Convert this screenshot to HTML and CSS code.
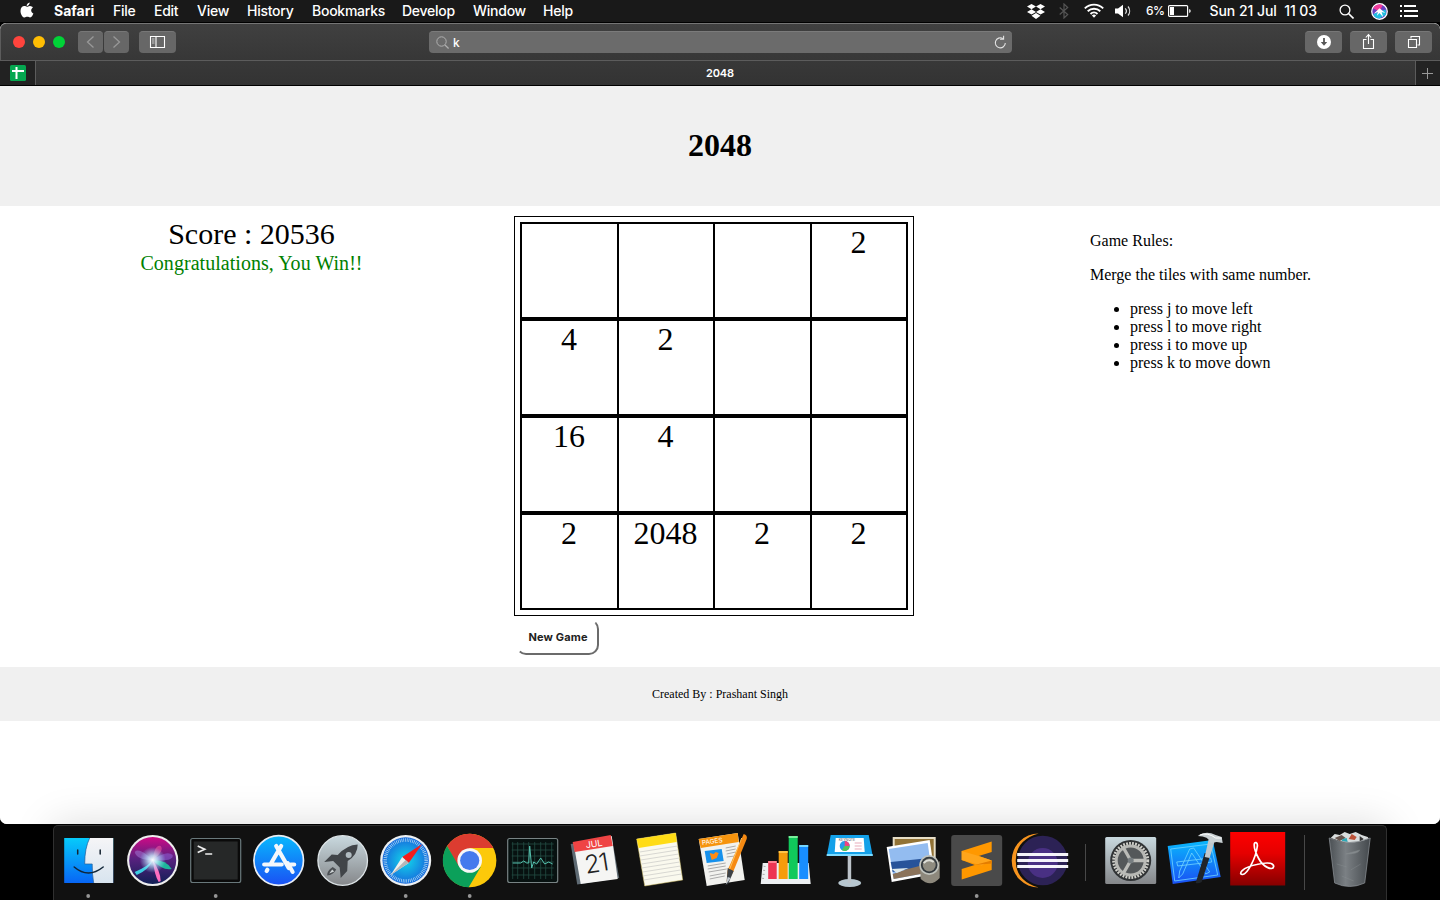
FILE: index.html
```html
<!DOCTYPE html>
<html lang="en">
<head>
<meta charset="utf-8">
<title>2048</title>
<link rel="stylesheet" href="styles.css">
</head>
<body>
<div class="desktop">
  <header class="menubar">
    <svg class="apple" viewBox="0 0 14 17"><path fill="#fff" d="M9.700.4c.1 1.600-1.200 3.400-3 3.500C6.500 2.300 8 .6 9.700.4zM7 4.800c.7 0 1.700-.9 3.100-.8 1.100.1 2.100.5 2.800 1.500-2.500 1.600-2.100 4.900.5 6-.6 1.700-1.900 4-3.300 4-1.100 0-1.500-.7-2.800-.7s-1.700.7-2.800.7C2.700 15.500.5 12.200.5 8.900.5 5.900 2.300 4.100 4.300 4.100c1.200 0 2 .7 2.700.7z"/></svg>
    <nav class="menus">
      <b>Safari</b><span>File</span><span>Edit</span><span>View</span><span>History</span><span>Bookmarks</span><span>Develop</span><span>Window</span><span>Help</span>
    </nav>
    <div class="status">
      <svg class="s-dropbox" viewBox="0 0 20 17"><g fill="#fff"><path d="M5.500 1l4.500 2.600-4.500 2.700L1 3.600zM14.500 1L19 3.600l-4.500 2.700L10 3.600zM5.500 6.300L10 9l-4.500 2.600L1 9zM14.500 6.300L19 9l-4.500 2.600L10 9zM5.500 12.700L10 10l4.500 2.700-4.500 3.300z"/></g></svg>
      <svg class="s-bt" viewBox="0 0 10 16"><path d="M.7 4.500l8 7L5 15V1l3.700 3.500-8 7" fill="none" stroke="#555" stroke-width="1.200"/></svg>
      <svg class="s-wifi" viewBox="0 0 20 15"><g fill="none" stroke="#fff" stroke-width="1.900"><path d="M.8 5.400a13 13 0 0 1 18.400 0M3.700 8.300a9 9 0 0 1 12.600 0M6.500 11a5 5 0 0 1 7 0"/></g><path fill="#fff" d="M7.900 12.500a3 3 0 0 1 4.200 0L10 14.700z"/></svg>
      <svg class="s-vol" viewBox="0 0 18 14"><path fill="#fff" d="M1 4.500h3L9 .8v12.400L4 9.500H1z"/><path d="M11.200 4.300a4 4 0 0 1 0 5.400M14 2.500a7 7 0 0 1 0 9" fill="none" stroke="#ddd" stroke-width="1.200"/></svg>
      <span class="pct">6%</span>
      <svg class="s-bat" viewBox="0 0 24 12"><rect x=".6" y=".6" width="19" height="10.800" rx="1" fill="none" stroke="#fff" stroke-width="1.200"/><path fill="#fff" d="M2 2h4v8H2zM21.200 4c2 .7 2 3.300 0 4z"/></svg>
      <span class="clock">Sun 21 Jul&nbsp; 11 03</span>
      <svg class="s-search" viewBox="0 0 15 15"><circle cx="6" cy="6" r="4.900" fill="none" stroke="#fff" stroke-width="1.300"/><path d="M9.500 9.500l5 5" stroke="#fff" stroke-width="1.600"/></svg>
      <svg class="s-siri" viewBox="-8 -8 16 16"><circle r="7.300" fill="#6a3fc0" stroke="#fff" stroke-width="1.200"/><path fill="#f23c9b" d="M0 0L-6-3A6.600 6.600 0 0 1 3-6z"/><path fill="#20bfe0" d="M0 0L-6 2.500A6.600 6.600 0 0 0 0 6.500L6 3 6-2z"/><path fill="#fff" d="M0-3L5.500 1.500 2 .5l1.500 5L0 1.500-2.500 4-1.500.5-5.500 2z"/></svg>
      <svg class="s-list" viewBox="0 0 18 12"><path d="M0 1h2M0 6h2M0 11h2M4 1h12M4 6h14M4 11h14" stroke="#fff" stroke-width="1.900"/></svg>
    </div>
  </header>

  <section class="window">
    <div class="toolbar">
      <div class="lights"><i class="red"></i><i class="yellow"></i><i class="green"></i></div>
      <div class="navs">
        <span class="btn nav"><svg width="24" height="22"><path d="M15.500 5.500L9.500 11l6 5.500" fill="none" stroke="#989898" stroke-width="1.300"/></svg></span>
        <span class="btn nav"><svg width="24" height="22"><path d="M9.500 5.500l6 5.500-6 5.500" fill="none" stroke="#989898" stroke-width="1.300"/></svg></span>
      </div>
      <span class="btn side"><svg width="37" height="22"><path d="M11.500 5.500h14v11h-14zM17 5.500v11" fill="none" stroke="#fff" stroke-width="1.100"/><path d="M13 8h2.500M13 10h2.500M13 12h2.500" stroke="#ccc" stroke-width="1"/></svg></span>
      <div class="address">
        <svg width="13" height="13"><circle cx="5.500" cy="5.500" r="4.700" fill="none" stroke="#b0b0b0"/><path d="M9 9l3.600 3.500" stroke="#b0b0b0" stroke-width="1.200"/></svg>
        <span>k</span>
        <svg class="reload" width="14" height="15"><path d="M9.800 3.500A5 5 0 1 0 12.300 8M10.600.8V4.200H7" fill="none" stroke="#e4e4e4" stroke-width="1.100"/></svg>
      </div>
      <div class="actions">
        <span class="btn"><svg width="37" height="22"><circle cx="19" cy="11" r="7" fill="#fff"/><path d="M19 7v5" stroke="#555" stroke-width="1.800"/><path d="M15.800 11h6.400L19 14.800z" fill="#555"/></svg></span>
        <span class="btn"><svg width="37" height="22"><path d="M16.500 8.500h-3v9h10v-9h-3M18.500 13V4M15.800 6.500l2.700-2.900 2.700 2.900" fill="none" stroke="#fff" stroke-width="1.100"/></svg></span>
        <span class="btn"><svg width="37" height="22"><path d="M13.500 8.500h8v8h-8zM16 7.500V5.500h8.500v8.500h-2" fill="none" stroke="#fff" stroke-width="1.100"/></svg></span>
      </div>
    </div>
    <div class="tabs">
      <span class="pinned"><svg width="16" height="16"><rect width="16" height="16" rx="1.500" fill="#05a750"/><path d="M2 6h12M6.500 2v12" stroke="#fff" stroke-width="2"/></svg></span>
      <span class="tab">2048</span>
      <span class="add"><svg width="24" height="24"><path d="M11.500 7v11M6 12.500h11" stroke="#999"/></svg></span>
    </div>

    <main class="page">
      <div class="banner"><h1>2048</h1></div>
      <div class="content">
        <div class="score"><p class="points">Score : 20536</p><p class="win">Congratulations, You Win!!</p></div>
        <div class="game">
          <div class="board">
            <div class="row"><div></div><div></div><div></div><div>2</div></div>
            <div class="row"><div>4</div><div>2</div><div></div><div></div></div>
            <div class="row"><div>16</div><div>4</div><div></div><div></div></div>
            <div class="row"><div>2</div><div>2048</div><div>2</div><div>2</div></div>
          </div>
          <button class="new-game">New Game</button>
        </div>
        <div class="rules">
          <p>Game Rules:</p>
          <p>Merge the tiles with same number.</p>
          <ul><li>press j to move left</li><li>press l to move right</li><li>press i to move up</li><li>press k to move down</li></ul>
        </div>
      </div>
      <footer>Created By : Prashant Singh</footer>
    </main>
  </section>

  <div class="dock">
    <svg width="0" height="0" class="defs"><defs>
      <linearGradient id="finder" x2="0" y2="1"><stop stop-color="#06cbfb"/><stop offset="1" stop-color="#0866f5"/></linearGradient>
      <linearGradient id="silver" x2="0" y2="1"><stop stop-color="#c9d9df"/><stop offset="1" stop-color="#85878a"/></linearGradient>
      <linearGradient id="blue" x2="0" y2="1"><stop stop-color="#08b9fd"/><stop offset="1" stop-color="#1a50f4"/></linearGradient>
      <linearGradient id="face" x2="0" y2="1"><stop stop-color="#f5f5f7"/><stop offset="1" stop-color="#d8e4ef"/></linearGradient>
      <radialGradient id="compass"><stop stop-color="#12d8ea"/><stop offset="1" stop-color="#176bdd"/></radialGradient>
      <linearGradient id="pdf" x2="0" y2="1"><stop stop-color="#fe0000"/><stop offset=".4" stop-color="#e50000"/><stop offset="1" stop-color="#850000"/></linearGradient>
      <linearGradient id="bin"><stop stop-color="#4b5054"/><stop offset=".4" stop-color="#7b8084"/><stop offset="1" stop-color="#44494d"/></linearGradient>
      <linearGradient id="siribg" x2="0" y2="1"><stop stop-color="#d00a86"/><stop offset=".45" stop-color="#5a2180"/><stop offset="1" stop-color="#111f55"/></linearGradient>
      <radialGradient id="glow"><stop stop-color="#fff"/><stop offset=".35" stop-color="#cdefff" stop-opacity=".8"/><stop offset="1" stop-color="#9df" stop-opacity="0"/></radialGradient>
    </defs></svg>

    <svg class="app" viewBox="-31.7 0 63.400 74">
      <path d="M-24.500 12h49v45h-49z" fill="url(#finder)"/><path d="M1 12H24.500v45H5Q3.500 49 3.500 38H-4Q-4 22 1 12z" fill="url(#face)"/>
      <path d="M1 12Q-4 22-4 38H3.500q0 11 1.500 19" fill="none" stroke="#245f99" stroke-width=".7"/><path d="M-11 24v4M11.500 24v4" stroke="#152331" stroke-width="1.500" stroke-linecap="round"/><path d="M-14.500 41q14 12 29 0" fill="none" stroke="#102538" stroke-width="1.500" stroke-linecap="round"/><circle cx="-.5" cy="70" r="1.900" fill="#969696"/></svg>
    <svg class="app" viewBox="-31.7 0 63.400 74"><circle cy="34.500" r="25.600" fill="#eee"/><circle cy="34.500" r="23.500" fill="url(#siribg)"/>
      <path d="M0 34Q-14 21-18 26q2 8 18 8" fill="#9d77d3" opacity=".55"/><path d="M0 34Q2 18 8 20q4 5-8 14" fill="#e8559f" opacity=".6"/><path d="M0 34Q14 24 20 29 21 36 0 34" fill="#8d5bd0" opacity=".6"/><path d="M0 34Q14 34 19 43 10 45 0 34" fill="#1ac6a0" opacity=".9"/><path d="M0 34Q-4 40-18 46L-16 49Q-4 44 0 34" fill="#3ee0f0" opacity=".9"/><path d="M0 34Q2 50 6 56l2-1Q8 46 0 34" fill="#ff6dbf"/><circle cy="34" r="13" fill="url(#glow)"/></svg>
    <svg class="app" viewBox="-31.7 0 63.400 74"><rect x="-25" y="12.500" width="50" height="44" rx="2" fill="#0a0a0a" stroke="#69787b" stroke-width="1.200"/><path d="M-22 15.500h44v38h-44z" fill="#262828"/><path d="M-18 20l7 3.200-7 3.200M-10.500 28h7" fill="none" stroke="#eee" stroke-width="1.700"/><circle cy="70" r="1.900" fill="#969696"/></svg>
    <svg class="app" viewBox="-31.7 0 63.400 74"><circle cy="34.500" r="24.800" fill="url(#blue)" stroke="#e9eef4" stroke-width="1.700"/><g stroke="#f4f7fb" stroke-width="4.200" stroke-linecap="round"><path d="M2.500 20L-8 38M-2.500 20L10 42M-14.500 38.500H3M12 38.500h3.500M-12 45l.7-1.200"/></g><path d="M9 37l5 9" stroke="#f4f7fb" stroke-width="4" stroke-linecap="round"/></svg>
    <svg class="app" viewBox="-31.7 0 63.400 74"><circle cy="34.500" r="24.800" fill="url(#silver)" stroke="#dce3e6" stroke-width="1.300"/><path fill="#414549" d="M15 18.500Q4 19-5 29l-6-.5-7.500 7.500 9-1 6.500 6.500L-2 52l6.500-7 .5-10Q15 29 15 18.500z"/><circle cx="6" cy="29" r="3" fill="#b0bbc0"/><path d="M-10 41q-6 4-5.500 8.500 6-.5 9-6z" fill="#4b4f53"/><path d="M-10.500 43.500l-3 4 5-2z" fill="#d0d5d7"/></svg>
    <svg class="app" viewBox="-31.7 0 63.400 74"><circle cy="34.500" r="25.500" fill="#edf0f2"/><circle cy="34.500" r="23.200" fill="url(#compass)"/><circle cy="34.500" r="20.500" fill="none" stroke="#b5dcf6" stroke-width="3.500" stroke-dasharray=".7 1.100"/><path d="M16.500 18L-3.500 31l6.500 6z" fill="#f31c1c"/><path d="M-15 49l11.500-18L3 37z" fill="#f0f0ed"/><path d="M-15 49L3 37l-3-3z" fill="#b5b7b8"/><circle cy="70" r="1.900" fill="#969696"/></svg>
    <svg class="app" viewBox="-31.7 0 63.400 74"><circle cy="34.500" r="26.700" fill="#fcc90a"/><path d="M-22.600 20A26.700 26.700 0 0 1 23.600 22L0 22-11 42z" fill="#dc3c30"/><path d="M-22.600 20A26.700 26.700 0 0 0-1 61.200L11 41-11 40z" fill="#0ba05a"/><circle cy="34.500" r="12.300" fill="#f7f7f7"/><circle cy="34.500" r="9.600" fill="#447aed"/><circle cy="70" r="1.900" fill="#969696"/></svg>
    <svg class="app" viewBox="-31.7 0 63.400 74"><rect x="-25" y="12.500" width="50" height="44" rx="2" fill="#071110" stroke="#788384" stroke-width="1.200"/><path d="M-20 16v37M-15 16v37M-9 16v37M-4 16v37M2 16v37M8 16v37M13 16v37M19 16v37M-21 18h42M-21 24h42M-21 30h42M-21 36h42M-21 42h42M-21 49h42" stroke="#234c44" stroke-width=".8"/><path d="M-20 37h8l3-2 3 2h2l1-17 2 22 2-6 3 2 4-6 4 6 4-2 4 2" fill="none" stroke="#55c2af"/></svg>
    <svg class="app" viewBox="-31.7 0 63.400 74"><path d="M-25 18l41-7 7.500 41-42 6.500z" fill="#5e6a73"/><path d="M-22 18l38-8 6 43-37 5z" fill="#f5f5f4"/><path d="M-23 16l38-7 2 11-38 6z" fill="#ef4444"/><g transform="rotate(-9 0 35)"><text x="1" y="21" class="month">JUL</text><text x="0" y="46" class="day">21</text></g></svg>
    <svg class="app" viewBox="-31.7 0 63.400 74"><path d="M-23 13l39-6 7 47-38 6z" fill="#faf9ee" stroke="#d6c565" stroke-width=".5"/><path d="M-23 13l39-6 1 9-38 6z" fill="#ffdc16"/><path d="M-20 26l38-6M-20 30l38-6M-19 34l38-6M-18 38l38-6M-18 42l38-6M-17 46l38-6M-17 50l38-6M-16 54l38-6" stroke="#c8c8c5" stroke-width=".7"/></svg>
    <svg class="app" viewBox="-31.7 0 63.400 74"><path d="M-24 13l39-6 7 47-38 6z" fill="#f2f2ef"/><path d="M-24 13l39-6 1 9-38 6z" fill="#f6940e"/><text class="pages" transform="rotate(-8)" x="-23" y="16">PAGES</text><path d="M-18 25l17-2 2 12-17 2z" fill="#1791ec"/><path d="M-13 27l4 1 2-2 3 1-2 5-5 2z" fill="#ff8b13"/><path d="M3 22l10-2M3 25l10-2M4 28l9-2M4 31l8-1M-15 40l18-3M-15 43l18-3M-14 46l18-3M-13 50l16-3M-13 53l15-3" stroke="#aaa"/><path d="M21 8q4 1 3 5L10 47l-6 9 1-12z" fill="#f68a13"/><path d="M5 42l6 3-6 14-1-4z" fill="#3d4247"/><path d="M3 59l2-8 3 1z" fill="#c5ccd2"/><path d="M19 12L7 43" stroke="#ffc45c"/></svg>
    <svg class="app" viewBox="-31.7 0 63.400 74"><path d="M-23 37h46l2 21h-50z" fill="#edf0f2"/><path d="M-21 40l-2 15" stroke="#aaa" stroke-width="2" stroke-dasharray="1 3"/><path fill="#ed3553" d="M-17.500 35h8.500v18h-8.500z"/><path fill="#f69c0c" d="M-7 25h9v28h-9z"/><path fill="#10c95b" d="M3 10h9v43H3z"/><path fill="#188eff" d="M13.500 19h9v34h-9z"/><path d="M-17.500 36h8.500" stroke="#ff8290" stroke-width="2"/><path d="M-7 26h9" stroke="#ffc448" stroke-width="2"/><path d="M3 11h9" stroke="#7bef9b" stroke-width="2"/><path d="M13.500 20h9" stroke="#74d6ff" stroke-width="2"/></svg>
    <svg class="app" viewBox="-31.7 0 63.400 74"><ellipse cy="57" rx="11.500" ry="4" fill="#b7c7d0"/><path d="M-2 30h3.500v27h-3.500z" fill="#bdc4ca"/><path d="M-19 9h38l4 21h-46z" fill="#14a1e9"/><path d="M-23 28h46v2h-46z" fill="#7fdcff"/><path d="M-14 12h28l1 14h-30z" fill="#fff"/><text class="keynote" x="-11" y="15">KEYNOTE</text><circle cx="-5" cy="20" r="5" fill="#249cea"/><path d="M-5 20v-5a5 5 0 0 1 5 5z" fill="#ee437e"/><path d="M-5 20h5a5 5 0 0 1-8 4z" fill="#54c55a"/><path d="M5 17h7M5 20h7M5 23h7" stroke="#e7abba"/></svg>
    <svg class="app" viewBox="-31.7 0 63.400 74"><path d="M-20 11h43v34h-43z" fill="#e7dec7"/><path d="M-18 13h39v30h-39z" fill="#927336"/><path d="M-26 21l43-7 5 34-43 8z" fill="#fff"/><path d="M-24 23l39-6 4 29-38 7z" fill="#93bcf0"/><path d="M-22 36l39-4 1 8-38 6z" fill="#27539a"/><path d="M-20 48l15-5 8-2 15-4 1 9-38 7z" fill="#8b735b"/><path d="M-21 43l17-1-12 5z" fill="#e0ebed"/><path d="M7 36q10 12 20-1v17q-9 10-19 1z" fill="#8d887c"/><circle cx="16.500" cy="39" r="10" fill="#c0c3bd"/><circle cx="16.500" cy="39" r="8.300" fill="#343a3e"/><circle cx="16.500" cy="39" r="6.500" fill="#8f8c80"/><path d="M11 37q5-5 10-1" stroke="#dedfd8" stroke-width="2" fill="none"/></svg>
    <svg class="app" viewBox="-31.7 0 63.400 74"><rect x="-25.500" y="9" width="51" height="51" rx="3" fill="#4a4a4a"/><path d="M-15 25l30-9.500V26L2 30l13 4.500V44l-30 9.500V43l13-4-13-5z" fill="#ff9800"/><path d="M2 30l13 4.500-10 5-20-5.500v-9z" fill="#ffa51b"/><path d="M15 34.500v3L-2 39z" fill="#e47d00"/><circle cy="70" r="1.900" fill="#969696"/></svg>
    <svg class="app" viewBox="-31.7 0 63.400 74"><path d="M-1 7.500a27 27 0 1 0 0 54Q-24 55-24 34.500T-1 7.500z" fill="#f7941e"/><circle cx="3" cy="34.500" r="24.800" fill="#2c2255"/><circle cx="3" cy="37" r="15" fill="#493083"/><path d="M-22.500 28.500h51M-22.500 34.500h51M-22.500 40.500h51" stroke="#f5f4fa" stroke-width="3"/></svg>
    <i class="divider short"></i>
    <svg class="app" viewBox="-31.7 0 63.400 74"><rect x="-25.500" y="11" width="51" height="47" rx="1.500" fill="url(#silver)"/><circle cy="34.500" r="20.500" fill="#303335"/><circle cy="34.500" r="17" fill="none" stroke="#d1d1cb" stroke-width="3" stroke-dasharray="1.800 1.200"/><circle cy="34.500" r="14.500" fill="#54585a" stroke="#b8b9b5" stroke-width="3"/><path d="M0 34.500h15M0 34.500l-8-14M0 34.500l-8 14" stroke="#bbbcb8" stroke-width="3.300"/><circle cy="34.500" r="3" fill="#777e81"/></svg>
    <svg class="app" viewBox="-31.7 0 63.400 74"><path d="M-27 20l45-6 8 37-48 7z" fill="url(#blue)"/><path d="M-24 23l40-5 7 31-43 6zM-18 36l34-4 1 4-34 4zM-5 23l4-1 16 24-4 2-14-21-9 21-4 4 1-7z" fill="none" stroke="#71d5ff" stroke-width=".8"/><path d="M10 27l6 1-9 28q-3 2-6 1z" fill="#20252b"/><path d="M14 13l6 2-5 17-5-1z" fill="#bfc8ce"/><path d="M3 10q8-6 18-1l6 2 1 6-6-1-6 1q-2-7-13-7z" fill="#c9d0d3"/><path d="M5 9q8-3 16 3h6" fill="none" stroke="#fff"/></svg>
    <svg class="app" viewBox="-31.7 0 63.400 74"><path d="M-27.500 6h55v53.500h-55z" fill="url(#pdf)"/><path d="M-3.500 19c0-4 4-3 3 2C-2 32-10 48-15 48.500c-5 0-1-7 14-10 13-3 17-1 17 2-1 5-11 0-15-8C-2 27-3.500 22-3.500 19z" fill="none" stroke="#fff" stroke-width="1.700"/></svg>
    <i class="divider long"></i>
    <svg class="app" viewBox="-31.7 0 63.400 74"><path d="M-19 12l4-4 5 1 5-3 5 2 6-2 6 3 6 2 2 3-17 5z" fill="#d9dddd"/><path d="M-15 12l7-3 4 3-6 3" fill="#65534c"/><path d="M2 8l5 3-2 3-6-1z" fill="#bd5238"/><path d="M-7 13l4-1 1 4-6-1z" fill="#2ca9b8"/><path d="M10 10l4 3-4 3z" fill="#333"/><path d="M-20.500 12q20 9 41 0L15 57q-15 7-30 0z" fill="url(#bin)" stroke="#868c90" stroke-width=".8"/><path d="M-4 28l14-4q-1 4-14 4M-13 38l10 3M1 44l10-6M-8 50l12 5" fill="#9ba0a3" stroke="#8d9396" stroke-width=".6" opacity=".6"/></svg>
  </div>
</div>
</body>
</html>
```

FILE: styles.css
```css
* { box-sizing: border-box; }
body { margin: 0; background: #000; overflow: hidden; }
svg { display: block; flex: none; }
.desktop { width: 1440px; height: 900px; display: flex; flex-direction: column; font-family: Inter, "Liberation Sans", sans-serif; color: #fff; }

.menubar { height: 23px; flex: none; display: flex; align-items: center; background: #191919; border-bottom: 1px solid #000; font-size: 14px; line-height: 22px; font-weight: 500; white-space: pre; }
.apple { width: 14px; height: 17px; margin: -2px 20px 0 20px; }
.menus { display: flex; gap: 18px; flex: 1; }
.menus b { font-weight: 700; width: 41px; }
.menus span { letter-spacing: -.25px; }
.menus span:nth-child(2) { width: 23px; }
.menus span:nth-child(3) { width: 25px; }
.menus span:nth-child(4) { width: 32px; }
.menus span:nth-child(5) { width: 47px; }
.menus span:nth-child(6) { width: 72px; }
.menus span:nth-child(7) { width: 53px; }
.menus span:nth-child(8) { width: 52px; }
.status { display: flex; align-items: center; width: 414px; flex: none; }
.s-dropbox { width: 20px; height: 17px; }
.s-bt { width: 10px; height: 16px; margin-left: 13px; }
.s-wifi { width: 20px; height: 15px; margin: -2px 0 0 15px; }
.s-vol { width: 18px; height: 14px; margin-left: 10px; }
.pct { font-size: 12px; width: 18px; margin-left: 14px; letter-spacing: -.5px; }
.s-bat { width: 24px; height: 12px; margin-left: 4px; }
.clock { width: 108px; margin-left: 17.5px; letter-spacing: -.05px; }
.s-search { width: 15px; height: 15px; margin-left: 21px; }
.s-siri { width: 17px; height: 17px; margin-left: 17px; }
.s-list { width: 18px; height: 12px; margin-left: 12px; }

.window { height: 801px; flex: none; border-radius: 6px 6px 7px 7px; overflow: hidden; background: #fff; display: flex; flex-direction: column; }
.toolbar { height: 38px; flex: none; display: flex; align-items: center; background: linear-gradient(#404040, #373737); border-top: 1px solid #757575; border-bottom: 1px solid #5c5c5c; border-left: 1px solid #5c5c5c; border-radius: 6px 6px 0 0; padding-left: 12px; }
.lights { display: flex; gap: 8px; width: 65px; }
.lights i { width: 12px; height: 12px; border-radius: 50%; }
.red { background: #ff443d; }
.yellow { background: #ffbe03; }
.green { background: #00d337; }
.navs { display: flex; gap: 1px; }
.btn { width: 37px; height: 22px; border-radius: 4px; background: #676767; border-top: 1px solid #777; display: block; }
.btn svg { margin-top: -1px; }
.nav { width: 25px; }
.side { margin-left: 10px; }
.address { width: 583px; height: 22px; margin-left: 253px; border-radius: 4px; background: #6b6b6b; border-top: 1px solid #7b7b7b; display: flex; align-items: center; padding: 0 5px 0 7px; font-size: 12px; font-weight: 500; }
.address span { margin-left: 4px; flex: 1; }
.actions { display: flex; gap: 8px; margin-left: auto; margin-right: 8px; }
.tabs { height: 25px; flex: none; display: flex; background: linear-gradient(#383838, #333); border-bottom: 1px solid #000; font-size: 11px; font-weight: 600; }
.pinned { width: 36px; padding: 4px 0 0 10px; background: #222; border-right: 1px solid #5c5c5c; }
.tab { flex: 1; text-align: center; line-height: 24px; padding-right: 12px; letter-spacing: -.15px; text-indent: 1px; }
.add { width: 25px; border-left: 1px solid #5c5c5c; background: #232323; }

.page { flex: 1; color: #000; font-family: "Liberation Serif", serif; background: #fff; }
.banner { height: 120px; background: #f0f0f0; display: flex; align-items: center; justify-content: center; }
h1 { margin: 0 0 2px; font-size: 32px; line-height: 36px; }
.content { height: 461px; display: grid; grid-template-columns: 514px 576px 1fr; }
.score { width: 503px; text-align: center; padding-top: 10px; }
.score p { margin: 0; }
.points { font-size: 30px; line-height: 36px; }
.win { font-size: 20px; line-height: 22px; letter-spacing: .04px; color: #008000; }
.game { padding-top: 10px; }
.board { width: 400px; height: 400px; border: 1px solid #000; padding: 5px; }
.row { height: 97px; border: 2px solid #000; display: grid; grid-template-columns: 97px 96px 97px 94px; text-align: center; font-size: 32px; line-height: 37px; }
.row div { border-right: 2px solid #000; padding-right: 1px; }
.row div:last-child { border-right: 0; }
.new-game { display: block; width: 83px; height: 36px; margin: 3px 0 0 2px; padding: 0 0 0 1px; font: 700 11px Inter, sans-serif; letter-spacing: .15px; color: #222; background: #fff; border: 2px solid; border-color: #fff #6b6b6b #6b6b6b #fff; border-radius: 10px; white-space: nowrap; }
.rules { padding-top: 26px; font-size: 16px; line-height: 18px; }
.rules p { margin: 0 0 16px; }
.rules ul { margin: 0; padding-left: 40px; }
footer { height: 54px; background: #f0f0f0; text-align: center; font-size: 12px; line-height: 54px; }

.dock { position: relative; width: 1334px; height: 75px; margin: 1px 0 0 53px; flex: none; background: #111; border: 1px solid #303030; border-bottom: 0; border-radius: 5px 5px 0 0; box-shadow: 0 0 42px rgba(0, 0, 0, .15); padding-left: 3.2px; display: flex; }
.defs { position: absolute; }
.app { width: 63.4px; height: 74px; }
.divider { width: 27.8px; flex: none; height: 55px; margin-top: 9px; background: linear-gradient(#484848, #484848) 14px 0 / 1px 100% no-repeat; }
.short { height: 37px; margin-top: 18px; }
.long { width: 29px; background-position: 15px 0; }
.month { font: 9px Inter, sans-serif; fill: #fff; text-anchor: middle; }
.day { font: 300 25px Inter, sans-serif; letter-spacing: -1px; fill: #222; text-anchor: middle; }
.pages { font: 6.500px Inter, sans-serif; fill: #fff; }
.keynote { font: 3.500px Inter, sans-serif; fill: #555; }
```
